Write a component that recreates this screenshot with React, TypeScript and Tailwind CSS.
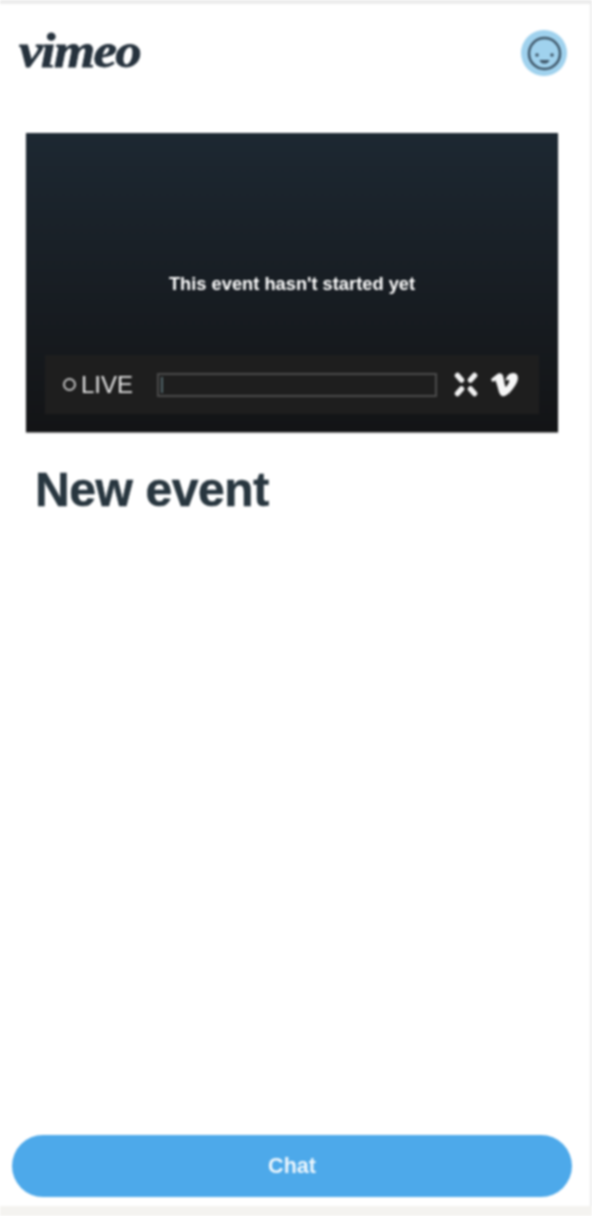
import { FaVimeoV } from "react-icons/fa";

function Face() {
  return (
    <svg width="46" height="46" viewBox="0 0 46 46" aria-hidden="true">
      <circle cx="23" cy="23" r="23" fill="#a0d2ee" />
      <circle cx="23.500" cy="23.500" r="15.500" fill="none" stroke="#40586a" strokeWidth="2.500" />
      <circle cx="16" cy="25" r="1.800" fill="#40586a" />
      <circle cx="31" cy="25" r="1.800" fill="#40586a" />
      <path d="M18.500 30h10c-.8 2.600-2.600 3.600-5 3.600s-4.200-1-5-3.600z" fill="#40586a" />
    </svg>
  );
}

function Expand() {
  return (
    <svg width="24" height="25" viewBox="0 0 24 25" fill="none" stroke="#f2f2f2" strokeWidth="5.500" strokeLinecap="round" aria-hidden="true">
      <path d="M3.500 3.500 7.500 8" />
      <path d="M20.500 3.500 16.500 8" />
      <path d="M3.500 21.500 7.500 17" />
      <path d="M20.500 21.500 16.500 17" />
    </svg>
  );
}

export default function App() {
  return (
    <div className="flex h-[1216px] w-[592px] flex-col overflow-hidden bg-white font-['Liberation_Sans',Arial,sans-serif] blur-[0.9px]">
      <div className="h-[4px] shrink-0 bg-[#ececec]" />
      <main className="flex min-h-0 flex-1 flex-col border-r-2 border-[#ececec]">
        <header className="flex h-[129px] shrink-0 items-start justify-between pl-[19px] pr-[22px]">
          <span className="mt-[19px] origin-left scale-x-[1.08] font-['Liberation_Serif',serif] text-[49px] leading-[56px] font-bold tracking-[-1.500px] text-[#26323d] italic [-webkit-text-stroke:0.800px_#26323d]">
            vimeo
          </span>
          <div className="mt-[26px] mr-[1px]">
            <Face />
          </div>
        </header>

        <section className="mx-[26px] flex h-[299px] w-[532px] shrink-0 flex-col bg-gradient-to-b from-[#1d2832] to-[#131416] shadow-[0_1px_1px_#9a9a9a]">
          <div className="flex h-[222px] shrink-0 items-end justify-center">
            <p className="mb-[59px] text-[18.300px] leading-[24px] font-bold text-white">
              This event hasn't started yet
            </p>
          </div>
          <div className="mx-[19px] flex h-[59px] items-center bg-[#1e1e1e] pl-[18px]">
            <span className="h-[13px] w-[13px] rounded-full border-[2.500px] border-[#c0c0c0]" />
            <span className="ml-[5px] w-[76px] text-[24px] leading-none text-[#e4e4e4]">LIVE</span>
            <div className="flex h-[24px] w-[280px] items-center border-2 border-[#4a4a4a] bg-[#1e1e1e] pl-[2px]">
              <span className="h-[16px] w-[2px] bg-[#52656a]" />
            </div>
            <div className="ml-[17px]">
              <Expand />
            </div>
            <FaVimeoV className="ml-[12px] stroke-[24px] text-[29px] text-[#f7f7f7]" />
          </div>
        </section>

        <h1 className="mt-[30px] ml-[35px] text-[48px] leading-[56px] font-bold tracking-[-0.400px] text-[#28363f] [-webkit-text-stroke:0.500px_#28363f]">
          New event
        </h1>

        <div className="mt-auto pb-[9px] pl-[12px]">
          <button className="flex h-[62px] w-[560px] items-center justify-center rounded-full bg-[#4da9ea] text-[21.500px] font-bold text-[#eef7fd]">
            Chat
          </button>
        </div>
      </main>
      <div className="h-[10px] shrink-0 bg-[#f4f3f0]" />
    </div>
  );
}
